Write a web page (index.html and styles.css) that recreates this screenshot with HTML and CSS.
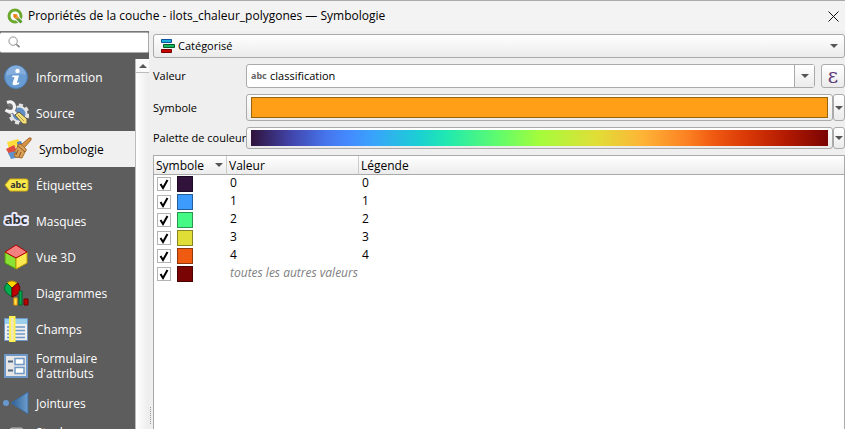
FILE: index.html
```html
<!DOCTYPE html>
<html lang="fr">
<head>
<meta charset="utf-8">
<title>Propriétés de la couche</title>
<link rel="stylesheet" href="styles.css">
</head>
<body>
<header class="titlebar">
  <svg class="logo" viewBox="0 0 16 16" aria-hidden="true">
    <circle cx="8" cy="8" r="6" fill="#fff" stroke="#6aa82e" stroke-width="3"/>
    <path d="M8 8l6.500 6.500" stroke="#f3f3f3" stroke-width="5"/>
    <path d="M9 9l5.500 5.500" stroke="#5a9a32" stroke-width="3"/>
    <path d="M6 6h4l2 5-5-1z" fill="#f0a040"/>
    <circle cx="8" cy="8" r="1.500" fill="#ee7913"/>
  </svg>
  <h1 class="title">Propriétés de la couche - ilots_chaleur_polygones — Symbologie</h1>
  <button class="close" type="button" aria-label="Fermer">
    <svg viewBox="0 0 11 11"><path d="M.5.5l10 10M10.500.5l-10 10" stroke="#111" fill="none"/></svg>
  </button>
</header>
<div class="dialog">
  <aside class="side">
    <label class="search">
      <svg viewBox="0 0 14 14" aria-hidden="true"><circle cx="5.500" cy="5.500" r="4.500" fill="none" stroke="#8a8a8a"/><path d="M9 9l3.500 3" stroke="#8a8a8a" stroke-width="2"/></svg>
      <input type="text" aria-label="Rechercher">
    </label>
    <div class="side-body">
      <nav class="menu">
        <a class="item" href="#">
          <svg viewBox="0 0 26 26"><circle cx="13" cy="13" r="11.500" fill="#6a9cd4" stroke="#4a7db8"/><path d="M3 12a10 10 0 0 1 20-1q-10-3-20 1z" fill="#86aedc"/><circle cx="14.500" cy="7" r="2.200" fill="#fff"/><path d="M9.500 11.500h6.500l-2.200 7.500 2.700-.8-.5 1.800q-3 1.500-6 1l-.5-1.500 2-6.500-2.500.3z" fill="#fff"/></svg>
          <span>Information</span></a>
        <a class="item" href="#">
          <svg viewBox="0 0 26 26"><circle cx="16" cy="14" r="9" fill="none" stroke="#e4e4e4" stroke-width="3" stroke-dasharray="4 3"/><circle cx="16" cy="14" r="7.500" fill="#5f8fc4" stroke="#e4e4e4" stroke-width="2"/><path d="M5 5.500q4-2.500 6 0 1.500 3-1 5.500-3 1-6-1.500M9 10l7 7" fill="none" stroke="#777" stroke-width="4.500"/><path d="M4 2.500q5-2 7 2 1.500 3.500-1 6.500-4 1.500-7.500-1M9 10l7 7" fill="none" stroke="#f4f4f4" stroke-width="3"/><path d="M12 15l4-3 8 7v5h-4z" fill="#f5df78" stroke="#5a5440"/><path d="M15 15l6 6" stroke="#a89a48"/></svg>
          <span>Source</span></a>
        <a class="item selected" href="#" aria-current="page">
          <svg viewBox="0 0 26 26"><path d="M1 6l11-3 4 6-13 4z" fill="#ffdc3c"/><path d="M0 13l8-4 3 6-8 3z" fill="#e04c40"/><path d="M11 6l4-1 2 5-5 2z" fill="#4c83c8"/><path d="M2 17l8-2 4 6-9 2z" fill="#5f92cc"/><path d="M15 9l8-7q3-1 2 2l-7 8z" fill="#d59445" stroke="#a86628"/><path d="M12 9q2-2 4 0l4 4q1 2-1 3l-3 6-7-1-1-3 3-1-3-2q3-1 4-6z" fill="#d9a05a" stroke="#a66e2c"/><path d="M12 10l7 6M12 14l-2 5M15 16l-2 5" stroke="#8c5824"/></svg>
          <span>Symbologie</span></a>
        <a class="item" href="#">
          <svg viewBox="0 0 26 26"><path d="M7 7h16q2 0 2 2v8q0 2-2 2H7l-5-6z" fill="#fcea4c" stroke="#d2ae14"/><text class="tag" x="15" y="16" text-anchor="middle">abc</text></svg>
          <span>Étiquettes</span></a>
        <a class="item" href="#">
          <svg viewBox="0 0 26 26"><text class="mask" x="13" y="16" text-anchor="middle">abc</text></svg>
          <span>Masques</span></a>
        <a class="item" href="#">
          <svg viewBox="0 0 26 26" stroke-linejoin="round"><path d="M2 8l11 6v11L2 19z" fill="#8ae234" stroke="#4e9a06"/><path d="M24 8l-11 6v11l11-6z" fill="#fce94f" stroke="#c4a000"/><path d="M13 1l11 7-11 6L2 8z" fill="#f58080" stroke="#b00000"/></svg>
          <span>Vue 3D</span></a>
        <a class="item" href="#">
          <svg viewBox="0 0 26 26"><path d="M9 8L4 3q5-4 10 0z" fill="#ffd500" stroke="#b88f00"/><path d="M9 8L4 3q-7 7 5 14z" fill="#00b050" stroke="#00602c"/><path d="M9 8l6-5q6 10-6 14z" fill="#c00000" stroke="#600"/><path d="M11 18h3v7h-3z" fill="#ffe24a" stroke="#f5a000"/><path d="M16 11h3v14h-3z" fill="#00a84f" stroke="#00602c"/><path d="M21 19h4v6h-4z" fill="#c00000" stroke="#600"/></svg>
          <span>Diagrammes</span></a>
        <a class="item" href="#">
          <svg viewBox="0 0 26 26"><path d="M1.500 2.500h23v22h-23z" fill="#eee" stroke="#6d98c8"/><path d="M2 3h22v5H2z" fill="#9ad0ec"/><path d="M4 11h18M4 14.500h18M4 18h18M4 21.500h18" stroke="#6d98c8" stroke-width="1.500"/><path d="M7 1h4.500v24H7z" fill="#efe6be" stroke="#fdf250" stroke-width="2"/></svg>
          <span>Champs</span></a>
        <a class="item double" href="#">
          <svg viewBox="0 0 26 26"><path d="M2 2h22v22H2z" fill="#e6e6e6" stroke="#6d98c8" stroke-width="2"/><path d="M5 8.500h5M5 17.500h5" stroke="#4f6580" stroke-width="2"/><path d="M12 5.500h9v6h-9zM12 14.500h9v6h-9z" fill="#fff" stroke="#6d98c8" stroke-width="1.500"/></svg>
          <span>Formulaire d'attributs</span></a>
        <a class="item" href="#">
          <svg viewBox="0 0 26 26"><defs><linearGradient id="join"><stop stop-color="#2f5f92"/><stop offset="1" stop-color="#6c9dce"/></linearGradient></defs><circle cx="3" cy="13" r="3" fill="#6898cf"/><path d="M8 13L25 2v22z" fill="url(#join)" stroke="#3d6d9e"/></svg>
          <span>Jointures</span></a>
        <a class="item double" href="#">
          <svg viewBox="0 0 26 26"><rect x="7" y="1" width="13" height="24" rx="2" fill="#999" stroke="#bbb"/></svg>
          <span>Stockage auxiliaire</span></a>
      </nav>
      <div class="scroll"><button type="button" class="scroll-up" aria-label="Défiler vers le haut"><i class="up"></i></button></div>
    </div>
  </aside>
  <div class="grip"></div>
  <main class="main">
    <button class="combo renderer" type="button">
      <svg viewBox="0 0 14 14"><path d="M.5.5h10v3H.5z" fill="#18b0d8" stroke="#0a50a0"/><path d="M2.500 5.500h11v3h-11z" fill="#10b860" stroke="#07582c"/><path d="M.5 10.500h10v3H.5z" fill="#c80000" stroke="#700"/></svg>
      <span>Catégorisé</span><i class="down"></i>
    </button>
    <div class="row value-row">
      <label for="field">Valeur</label>
      <div class="field"><span class="abc">abc</span><input id="field" type="text" value="classification"><button type="button" aria-label="Choisir un champ"><i class="down"></i></button></div>
      <button type="button" class="expr" aria-label="Expression">ε</button>
    </div>
    <div class="row symbol-row">
      <label for="symbol">Symbole</label>
      <button id="symbol" type="button" class="preview"><span class="orange"></span></button><button type="button" class="drop" aria-label="Options du symbole"><i class="down"></i></button>
    </div>
    <div class="row ramp-row">
      <label for="ramp">Palette de couleur</label>
      <button id="ramp" type="button" class="preview"><span class="ramp"></span></button><button type="button" class="drop" aria-label="Options de la palette"><i class="down"></i></button>
    </div>
    <div class="table-box">
      <table>
        <thead><tr><th class="c1">Symbole<i class="down"></i></th><th class="c2">Valeur</th><th>Légende</th></tr></thead>
        <tbody>
          <tr><td><span class="cell"><span class="check"><input type="checkbox" checked aria-label="0"><svg viewBox="0 0 14 14"><path d="M3.500 7l2.500 4 4.500-8"/></svg></span><i class="swatch s0"></i></span></td><td>0</td><td>0</td></tr>
          <tr><td><span class="cell"><span class="check"><input type="checkbox" checked aria-label="1"><svg viewBox="0 0 14 14"><path d="M3.500 7l2.500 4 4.500-8"/></svg></span><i class="swatch s1"></i></span></td><td>1</td><td>1</td></tr>
          <tr><td><span class="cell"><span class="check"><input type="checkbox" checked aria-label="2"><svg viewBox="0 0 14 14"><path d="M3.500 7l2.500 4 4.500-8"/></svg></span><i class="swatch s2"></i></span></td><td>2</td><td>2</td></tr>
          <tr><td><span class="cell"><span class="check"><input type="checkbox" checked aria-label="3"><svg viewBox="0 0 14 14"><path d="M3.500 7l2.500 4 4.500-8"/></svg></span><i class="swatch s3"></i></span></td><td>3</td><td>3</td></tr>
          <tr><td><span class="cell"><span class="check"><input type="checkbox" checked aria-label="4"><svg viewBox="0 0 14 14"><path d="M3.500 7l2.500 4 4.500-8"/></svg></span><i class="swatch s4"></i></span></td><td>4</td><td>4</td></tr>
          <tr><td><span class="cell"><span class="check"><input type="checkbox" checked aria-label="toutes les autres valeurs"><svg viewBox="0 0 14 14"><path d="M3.500 7l2.500 4 4.500-8"/></svg></span><i class="swatch s5"></i></span></td><td class="other">toutes les autres valeurs</td><td></td></tr>
        </tbody>
      </table>
    </div>
  </main>
</div>
</body>
</html>
```
FILE: styles.css
```css
* { box-sizing: border-box; }
body {
  margin: 0;
  height: 100vh;
  display: flex;
  flex-direction: column;
  overflow: hidden;
  background: #efefef;
  color: #000;
  font: 12px/16px "Open Sans", sans-serif;
}
button, input { font: inherit; color: inherit; margin: 0; padding: 0; }
svg { display: block; flex: none; }

.titlebar {
  display: flex;
  align-items: center;
  height: 31px;
  flex: none;
  padding: 0 6px 0 7px;
  gap: 5px;
  border-top: 1px solid #aaa;
  background: #f3f3f3;
}
.logo { width: 16px; height: 16px; }
.title { flex: 1; margin: 0; font-size: 12px; font-weight: 400; }
.close { border: 0; background: none; }
.close svg { width: 11px; height: 11px; }

.dialog { flex: 1; min-height: 0; display: flex; }
.side { width: 149px; flex: none; display: flex; flex-direction: column; background: #5d5d5d; border-top: 1px solid #777; }
.search { display: flex; align-items: center; height: 21px; flex: none; margin-bottom: 6px; padding: 0 8px; gap: 4px; background: #fff; border: 1px solid #aaa; border-left: 0; border-radius: 2px; }
.search svg { width: 13px; height: 13px; }
.search input { flex: 1; min-width: 0; border: 0; outline: 0; background: none; }
.side-body { flex: 1; min-height: 0; display: flex; }
.menu { flex: 1; min-width: 0; overflow: hidden; line-height: 15px; }
.item { display: flex; gap: 7px; align-items: center; height: 36px; padding-left: 3px; color: #fff; text-decoration: none; }
.item svg { width: 26px; height: 26px; }
.item.selected { background: #f0f0f0; color: #000; padding-left: 6px; }
.item.double { height: 38px; }
.item.double span { width: 66px; }
.tag { font: bold 9px "Noto Sans", sans-serif; fill: #333; }
.mask { font: bold 13px "Noto Sans", sans-serif; fill: #333; stroke: #e8e8ff; stroke-width: 4px; stroke-linejoin: round; paint-order: stroke; }
.scroll { width: 14px; flex: none; background: linear-gradient(90deg, #fff, #ececec); border-left: 1px solid #bbb; }
.scroll-up { display: flex; align-items: center; justify-content: center; width: 100%; height: 14px; border: 0; border-bottom: 1px solid #bbb; background: #fafafa; }
.up, .down { display: block; width: 0; height: 0; border: 4px solid transparent; border-top-width: 0; border-bottom: 4px solid #555; }
.down { border-top: 4px solid #555; border-bottom-width: 0; flex: none; }
.grip { width: 4px; flex: none; align-self: flex-end; height: 17px; padding-left: 1px; margin-bottom: 5px; }
.grip::before { content: ""; display: block; width: 2px; height: 100%; border-left: 1px dotted #999; }

.main { flex: 1; min-width: 0; display: flex; flex-direction: column; padding-top: 3px; }
.combo, .row { font-size: 11px; }
.combo, .expr, .drop, .preview { border: 1px solid #aaa; border-radius: 3px; background: linear-gradient(#fff, #ebebeb); }
.combo { display: flex; align-items: center; gap: 3px; height: 24px; padding: 0 6px 0 7px; flex: none; }
.combo svg { width: 14px; height: 14px; }
.combo span { flex: 1; text-align: left; }
.row { display: flex; align-items: stretch; margin-top: 6px; flex: none; }
.row label { width: 93px; flex: none; align-self: center; white-space: nowrap; }
.value-row { height: 24px; }
.symbol-row { height: 27px; }
.ramp-row { height: 22px; }
.field { flex: 1; display: flex; align-items: center; background: #fff; border: 1px solid #aaa; border-radius: 3px; margin-right: 6px; }
.field input { flex: 1; min-width: 0; border: 0; outline: 0; background: none; }
.field button { display: flex; align-items: center; justify-content: center; width: 20px; height: 100%; border: 0; border-left: 1px solid #aaa; background: linear-gradient(#fff, #ebebeb); }
.abc { width: 19px; margin-left: 4px; color: #666; font: bold 9px/12px "Noto Sans", sans-serif; }
.expr { width: 24px; font: 20px/16px "DejaVu Serif", serif; color: #5e3a78; }
.preview { flex: 1; padding: 2px 4px; }
.preview span { display: block; height: 100%; }
.orange { border: 1px solid #96640e; background: #ff9e17; }
.ramp { background: linear-gradient(90deg, #30123b, #4145ab 7%, #4675ed 13%, #448bff 17%, #39a2fc 21%, #1bcfd4 29%, #20e9b0 34%, #61fc6c 43%, #a4fc3b 50%, #e1dd37 60%, #feb336 68%, #fb7e21 76%, #f05b12 80%, #d93806 86%, #b11901 93%, #7a0402); }
.drop { display: flex; align-items: center; justify-content: center; width: 12px; }

.table-box { flex: 1; margin-top: 6px; background: #fff; border: 1px solid #aaa; border-bottom: 0; }
table { width: 100%; border-collapse: separate; border-spacing: 0; table-layout: fixed; }
th { height: 19px; padding: 1px 2px 0; text-align: left; font-weight: 400; border-bottom: 1px solid #aaa; border-right: 1px solid #ccc; background: linear-gradient(#fff, #ececec); }
th:last-child { border-right: 0; }
.c1 { width: 73px; }
.c2 { width: 132px; }
th .down { float: right; margin: 5px 1px 0 0; }
td { height: 18px; padding: 0 3px 2px; white-space: nowrap; }
td:first-child { padding-bottom: 0; }
.cell { display: flex; align-items: center; gap: 6px; }
.check { display: grid; }
.check > * { grid-area: 1 / 1; width: 14px; height: 14px; }
.check input { appearance: none; border: 1px solid #b4b4b4; background: #fff; }
.check svg { pointer-events: none; fill: none; stroke: #000; stroke-width: 2; visibility: hidden; }
.check input:checked + svg { visibility: visible; }
.swatch { width: 16px; height: 16px; border: 1px solid rgba(0, 0, 0, .4); }
.s0 { background: #30123b; }
.s1 { background: #3e9bfe; }
.s2 { background: #46f884; }
.s3 { background: #e1dd37; }
.s4 { background: #f05b12; }
.s5 { background: #7a0403; }
.other { color: #808080; font-style: italic; }
```
